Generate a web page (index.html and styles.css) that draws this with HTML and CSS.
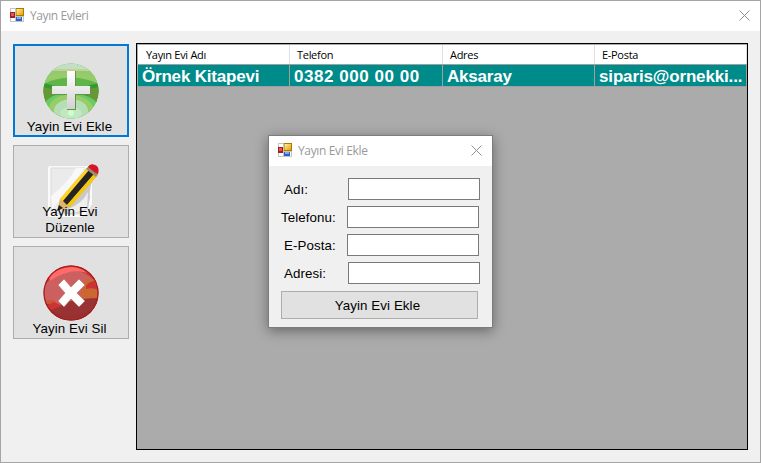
FILE: index.html
```
<!DOCTYPE html>
<html lang="tr">
<head>
<meta charset="utf-8">
<title>Yayın Evleri</title>
<link rel="stylesheet" href="styles.css">
</head>
<body>
<svg width="0" height="0" class="defs" aria-hidden="true">
  <defs>
    <linearGradient id="gold" x1="0" y1="0" x2="1" y2="1"><stop offset="0" stop-color="#fff0a0"/><stop offset="1" stop-color="#e8a000"/></linearGradient>
    <linearGradient id="plus" x1="0" y1="0" x2="0" y2="1"><stop offset="0" stop-color="#fff"/><stop offset="1" stop-color="#d2d2d2"/></linearGradient>
    <symbol id="app" viewBox="0 0 14 14">
      <path d="M0 0h14v14H0z" fill="#c4c4c4"/>
      <path d="M1 1h4v3H1zM1 10h4v3H1zM12 9h1v4h-1z" fill="#fff"/>
      <path d="M0 4h5v6H0z" fill="#a81c1c"/><path d="M1 5h3v3H1z" fill="#e05a48"/>
      <path d="M6 0h8v8H6z" fill="#b07800"/><path d="M6.500 1h6.500v6H6.500z" fill="url(#gold)"/>
      <path d="M6 9h6v4H6z" fill="#2c62c4"/><path d="M7 9h4v2H7z" fill="#78aef4"/>
    </symbol>
    <symbol id="close" viewBox="0 0 11 11"><path d="M.5 .5l10 10M10.500 .5l-10 10" stroke="#8f8f8f" stroke-width="1" fill="none"/></symbol>
    <clipPath id="disc"><circle cx="28" cy="28" r="27.500"/></clipPath>
  </defs>
</svg>
<div class="window">
  <header class="titlebar">
    <svg class="app-icon"><use href="#app"/></svg>
    <span class="caption main-caption">Yayın Evleri</span>
    <svg class="close"><use href="#close"/></svg>
  </header>
  <main class="content">
    <nav class="tools">
      <button class="tool focused">
        <svg class="icon" viewBox="0 0 56 56">
          <g clip-path="url(#disc)">
            <path d="M0 0h56v56H0z" fill="#5fb548"/>
            <path d="M0 7h56v14Q28 8 0 21z" fill="#8fcb73"/>
            <path d="M5 13Q28 7 51 13l3 6Q28 9 2 19z" fill="#99cc66"/>
            <path d="M0 0h56v7H0z" fill="#c0dfc3"/>
            <path d="M7 6h42v2H7z" fill="#c9ce91"/>
            <path d="M0 20l21 5-2 10L0 41zM56 20l-21 5 2 10 19 6z" fill="#339933"/>
            <path d="M0 24l14 3-5 10L0 41zM56 24l-14 3 5 10 9 4z" fill="#669933"/>
            <path d="M0 42Q8 29 28 30t28 12v14H0z" fill="#66cc66"/>
            <path d="M5 46Q9 31 28 32t23 14L28 58z" fill="#99cc66"/>
            <ellipse cx="28" cy="48" rx="17" ry="12" fill="#b4dfb4"/>
            <ellipse cx="28" cy="50" rx="11" ry="6" fill="#c3e6c3"/>
            <circle cx="28" cy="50" r="3" fill="#ccffcc"/>
          </g>
          <path d="M24 8h9v15h15v9H33v15h-9V32H9v-8h15z" fill="#679442"/>
          <path d="M24 8h8v15h15v8H32v15h-8V31H9v-8h15z" fill="url(#plus)"/>
        </svg>
        <span class="label">Yayin Evi Ekle</span>
      </button>
      <button class="tool two-line">
        <svg class="icon" viewBox="0 0 56 56">
          <path d="M7 2h42v38l-7 11-4 2H7q-2 0-2-2V4q0-2 2-2z" fill="#fafafa"/>
          <path d="M8 4h34v40l-6 6H8z" fill="#ebebeb" stroke="#d9d9d9"/>
          <path d="M8 32Q25 19 33 4h9L9 46z" fill="#f8f8f8"/>
          <path d="M18 45L50 16q-4 8-3 17l-2 12q-9 5-23 5z" fill="#c9c9c9"/>
          <path d="M25 45q14-5 20-17l-1 16q-8 5-19 5z" fill="#eee"/>
          <path d="M14 47l3-12 10 8z" fill="#dfb56b"/>
          <path d="M17 35L45 3l10 7-28 33z" fill="#e9b000"/>
          <path d="M17 35L44 4l3 2-27 31z" fill="#ffd326"/>
          <path d="M20 37L46 6l5 4-27 31z" fill="#242424"/>
          <path d="M24 41L51 10l4 1-28 32z" fill="#f4c711"/>
          <path d="M43 5l3-3 9 8-2 3z" fill="#9c8e72"/>
          <path d="M45 3q2-4 7-2 5 2 3 9-3-1-10-7z" fill="#d41724"/>
          <path d="M14 47l2-6 4 3z" fill="#222"/>
        </svg>
        <span class="label">Yayin Evi<br>Düzenle</span>
      </button>
      <button class="tool">
        <svg class="icon" viewBox="0 0 56 56">
          <g clip-path="url(#disc)">
            <path d="M0 0h56v56H0z" fill="#cc6060"/>
            <path d="M0 22Q5 0 28 0t27 20Q43 4 27 6T0 22z" fill="#cc3333"/>
            <path d="M6 12Q15 2 29 2q10 1 15 6-17-6-37 8z" fill="#ff6b6b"/>
            <path d="M38 20l6-6h8l4 14v10l-13 2-5-7z" fill="#cc6633"/>
            <path d="M43 21q2-4 8-5l5 9q-7-3-13-1z" fill="#cc3333"/>
            <path d="M2 36l8-1 8 7-12 4z" fill="#cc5733"/>
            <path d="M3 39l15 1q8-6 38-7v23H4z" fill="#993333"/>
            <path d="M3 41l8-4 8 4-11 4z" fill="#cc3333"/>
            <path d="M4 43q21 15 48 0l-7 10H9z" fill="#993030"/>
          </g>
          <circle cx="28" cy="28" r="27" fill="none" stroke="#a51d1d" stroke-width="1.200"/>
          <path d="M15 20l6-6 7 8 8-8 6 6-8 8 8 8-6 6-8-8-7 8-6-6 7-8z" fill="#fff" stroke="#bd6262" stroke-width=".6"/>
        </svg>
        <span class="label">Yayin Evi Sil</span>
      </button>
    </nav>
    <section class="grid">
      <div class="row head"><span>Yayın Evi Adı</span><span>Telefon</span><span>Adres</span><span>E-Posta</span></div>
      <div class="row selected"><span>Örnek Kitapevi</span><span class="phone">0382 000 00 00</span><span>Aksaray</span><span class="mail">siparis@ornekki...</span></div>
    </section>
  </main>
</div>
<section class="dialog">
  <header class="titlebar">
    <svg class="app-icon"><use href="#app"/></svg>
    <span class="caption dialog-caption">Yayın Evi Ekle</span>
    <svg class="close"><use href="#close"/></svg>
  </header>
  <form class="form">
    <label class="field outer"><span>Adı:</span><input></label>
    <label class="field phone-field"><span>Telefonu:</span><input></label>
    <label class="field"><span>E-Posta:</span><input></label>
    <label class="field outer"><span>Adresi:</span><input></label>
    <button type="button" class="submit">Yayin Evi Ekle</button>
  </form>
</section>
</body>
</html>
```
FILE: styles.css
```
* { box-sizing: border-box; }
body { margin: 0; width: 761px; height: 463px; overflow: hidden; position: relative; font: 13.333px/16px "Liberation Sans", sans-serif; color: #000; }
.defs { position: absolute; }
.window { width: 761px; height: 463px; border: 1px solid #a5a5a5; background: #f0f0f0; display: flex; flex-direction: column; }
.titlebar { height: 30px; flex: none; background: #fff; display: flex; align-items: center; padding: 0 10px 2px 9px; }
.app-icon { width: 14px; height: 14px; }
.caption { margin-left: 6px; padding-top: 2px; font: 12px/16px "Open Sans", sans-serif; color: #999; white-space: nowrap; }
.main-caption { letter-spacing: -.4px; }
.dialog-caption { letter-spacing: -.35px; }
.close { width: 11px; height: 11px; margin-left: auto; }
.content { flex: 1; display: flex; gap: 7px; padding: 12px; }
.tools { width: 116px; flex: none; display: flex; flex-direction: column; gap: 8px; padding-top: 1px; }
button { font: inherit; color: inherit; border: 1px solid #adadad; background: #e1e1e1; border-radius: 0; padding: 0; margin: 0; }
.tool { height: 93px; display: grid; justify-items: center; align-content: start; padding-top: 18px; }
.tool.focused { border: 2px solid #0078d7; padding-top: 17px; }
.icon { grid-area: 1 / 1; width: 56px; height: 56px; }
.label { grid-area: 1 / 1; margin: 56px 3px 0 0; z-index: 1; text-align: center; white-space: nowrap; letter-spacing: .08px; }
.two-line .label { margin-top: 40px; margin-right: 2px; }
.grid { flex: 1; height: 407px; border: 1px solid #000; background: #ababab; padding: 1px 0 0 1px; }
.row { display: grid; grid-template-columns: 152px 153px 152px 152px; width: 609px; }
.row span { border-right: 1px solid #a0a0a0; white-space: nowrap; overflow: hidden; }
.head { height: 20px; background: #fff; border-bottom: 1px solid #a0a0a0; font: 11px/19px "Open Sans", sans-serif; letter-spacing: -.3px; }
.head span { padding-left: 8px; border-color: #e0e0e0; }
.head span + span { padding-left: 7px; }
.selected { height: 22px; background: #008b8b; border-bottom: 1px solid #a0a0a0; color: #fff; font: bold 17px/23px "Liberation Sans", sans-serif; letter-spacing: -.2px; }
.selected span { padding-left: 4px; height: 21px; }
.selected .phone { letter-spacing: .55px; }
.selected .mail { letter-spacing: -.15px; }
.dialog { position: absolute; left: 268px; top: 135px; width: 225px; height: 193px; border: 1px solid #7c7c7c; background: #f0f0f0; box-shadow: 0 3px 12px rgba(0,0,0,.4); }
.form { display: flex; flex-direction: column; gap: 6px; padding: 12px 12px 0; }
.field { display: flex; justify-content: space-between; align-items: center; height: 22px; padding: 0 1px 0 3px; }
.field span { padding-top: 2px; letter-spacing: .08px; }
.field.outer { padding-right: 0; }
.field.phone-field { padding-left: 0; }
input { width: 132px; height: 22px; border: 1px solid #7a7a7a; border-radius: 0; background: #fff; padding: 0; margin: 0; }
.submit { width: 197px; height: 28px; margin-top: 1px; padding: 2px 4px 0 0; letter-spacing: .08px; }
```
